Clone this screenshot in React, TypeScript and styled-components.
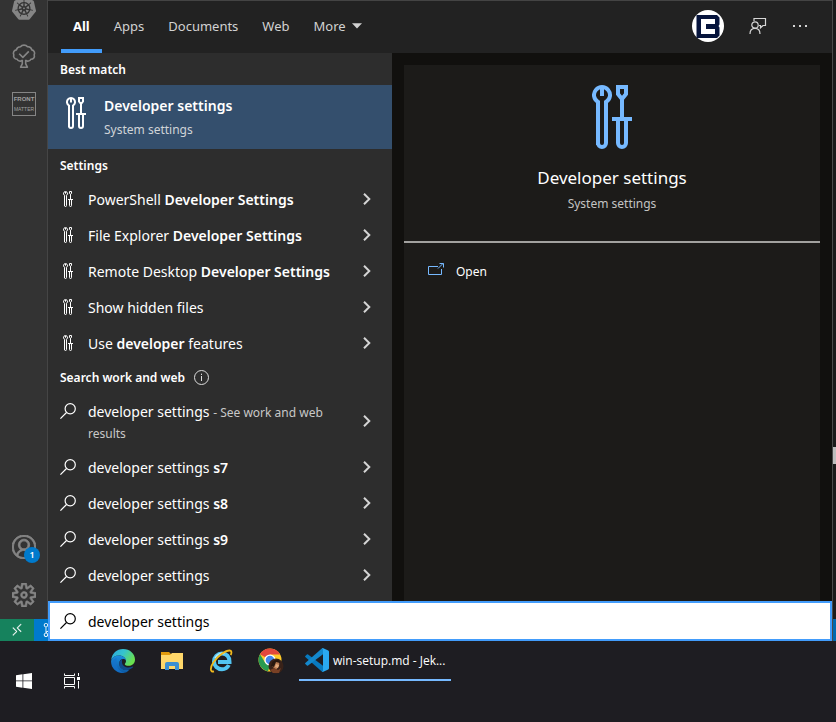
import React, { useState } from "react";
import styled, { createGlobalStyle, css } from "styled-components";
import { VscAccount, VscRemote, VscSettingsGear, VscSourceControl } from "react-icons/vsc";
import { SiKubernetes } from "react-icons/si";

const GlobalStyle = createGlobalStyle`
  * { box-sizing: border-box; }
  body {
    margin: 0;
    background: #1e1e1e;
    color: #fff;
    font-family: "Noto Sans", "Open Sans", sans-serif;
    font-size: 14px;
  }
  button, input { font: inherit; color: inherit; }
  button { margin: 0; padding: 0; border: 0; background: none; text-align: left; cursor: default; }
  svg { display: block; flex: none; }
`;

const Desktop = styled.div`
  display: flex;
  flex-direction: column;
  min-height: 100vh;
`;

const Workspace = styled.div`
  display: flex;
  flex: 1;
`;

/* Editor column */

const EditorSide = styled.aside`
  display: flex;
  flex-direction: column;
  flex: none;
  width: 48px;
`;

const ActivityBar = styled.div`
  display: flex;
  flex-direction: column;
  justify-content: space-between;
  flex: 1;
  padding-left: 1px;
  border-right: 1px solid #454545;
  background: #333;
  color: #858585;
`;

const ActivityGroup = styled.nav`
  display: flex;
  flex-direction: column;
`;

const Activity = styled.button<{ $clipped?: boolean; $heavy?: boolean }>`
  position: relative;
  display: flex;
  align-items: center;
  justify-content: center;
  height: 48px;
  ${(p) => p.$clipped && css`
    height: 32px;
    align-items: flex-end;
    padding-bottom: 12px;
    overflow: hidden;
  `}
  ${(p) => p.$heavy && css`
    svg { stroke: currentColor; stroke-width: 0.6; }
  `}
`;

const Badge = styled.span`
  position: absolute;
  right: 7px;
  bottom: 8px;
  width: 16px;
  height: 16px;
  border-radius: 50%;
  background: #007acc;
  color: #fff;
  font-size: 9px;
  font-weight: 600;
  line-height: 16px;
  text-align: center;
`;

const FrontMatterMark = styled.span`
  display: flex;
  flex-direction: column;
  align-items: center;
  justify-content: center;
  width: 24px;
  height: 24px;
  border: 1px solid #858585;
  color: #a0a0a0;
  font-family: "Liberation Sans", sans-serif;
  font-size: 5px;
  line-height: 10px;
  b { font-size: 6px; }
`;

const Status = styled.div`
  display: flex;
  height: 22px;
  color: #fff;
`;

const RemoteStatus = styled.button`
  display: flex;
  align-items: center;
  justify-content: center;
  width: 34px;
  background: #16825d;
  svg { stroke: currentColor; stroke-width: 0.4; }
`;

const BranchStatus = styled.button`
  display: flex;
  align-items: center;
  flex: 1;
  min-width: 0;
  padding-left: 8px;
  overflow: hidden;
  background: #007acc;
`;

const EditorEdge = styled.div`
  display: flex;
  flex-direction: column;
  justify-content: flex-end;
  flex: none;
  width: 4px;
  border-left: 1px solid #4a4a4a;
  background: #1b1b1b;
`;

const EdgeThumb = styled.div`
  height: 17px;
  margin-bottom: 155px;
  background: #bdbdbd;
`;

const EdgeStatus = styled.div`
  height: 22px;
  background: #0068ae;
`;

/* Search flyout */

const Flyout = styled.main`
  display: flex;
  flex-direction: column;
  flex: 1;
  min-width: 0;
`;

const Header = styled.header`
  display: flex;
  align-items: center;
  justify-content: space-between;
  height: 53px;
  padding: 0 24px 0 13px;
  border-top: 1px solid #444;
  background: #222;
`;

const Tabs = styled.nav`
  display: flex;
  height: 52px;
`;

const Tab = styled.button<{ $active?: boolean }>`
  display: flex;
  align-items: center;
  gap: 6px;
  padding: 2px 12px 0;
  border-bottom: 4px solid ${(p) => (p.$active ? "#429cfb" : "transparent")};
  color: ${(p) => (p.$active ? "#fff" : "#d2d2d2")};
  font-size: 13px;
  font-weight: ${(p) => (p.$active ? 700 : 400)};
`;

const HeaderActions = styled.div`
  display: flex;
  align-items: center;
  gap: 25px;
  padding-bottom: 2px;
  color: #d6d6d6;
`;

const Body = styled.div`
  display: flex;
  flex: 1;
`;

const Results = styled.section`
  flex: none;
  width: 344px;
  padding-bottom: 8px;
  background: #2d2d2d;
`;

const GroupTitle = styled.h2`
  display: flex;
  align-items: center;
  gap: 9px;
  height: 32px;
  margin: 0;
  padding-left: 12px;
  color: #fff;
  font-size: 12px;
  font-weight: 600;
`;

const BestMatch = styled.button`
  display: flex;
  align-items: flex-start;
  gap: 18px;
  width: 100%;
  height: 64px;
  padding: 12px 18px 0;
  background: #344f6d;
`;

const BestText = styled.span`
  display: flex;
  flex-direction: column;
  margin-top: -3px;
`;

const BestName = styled.span`
  font-weight: 600;
  line-height: 24px;
`;

const Caption = styled.span`
  color: #d0d4d8;
  font-size: 12px;
  line-height: 24px;
`;

const Row = styled.button<{ $tall?: boolean }>`
  display: flex;
  align-items: center;
  width: 100%;
  height: ${(p) => (p.$tall ? 56 : 36)}px;
  padding: 0 21px 0 12px;
`;

const RowIcon = styled.span<{ $top?: boolean }>`
  display: flex;
  justify-content: center;
  width: 16px;
  margin-right: 12px;
  ${(p) => p.$top && css`align-self: flex-start; margin-top: 10px;`}
`;

const RowText = styled.span<{ $wrapped?: boolean }>`
  flex: 1;
  min-width: 0;
  padding-right: 20px;
  line-height: 21px;
  ${(p) => p.$wrapped && css`padding-top: 2px;`}
  b { font-weight: 600; }
  small { color: #c8c8c8; font-size: 12px; line-height: 16px; }
`;

const Preview = styled.section`
  display: flex;
  flex: 1;
  min-width: 0;
  padding: 12px 12px 0;
  background: #11100e;
`;

const PreviewCard = styled.div`
  flex: 1;
  background: #1c1b19;
`;

const PreviewHead = styled.div`
  display: flex;
  flex-direction: column;
  align-items: center;
  height: 178px;
  padding-top: 20px;
  border-bottom: 2px solid #a2a19f;
`;

const PreviewTitle = styled.h1`
  margin: 17px 0 0;
  font-size: 17px;
  font-weight: 400;
  line-height: 24px;
`;

const PreviewCaption = styled.p`
  margin: 2px 0 0;
  color: #c4c4c3;
  font-size: 12px;
  line-height: 24px;
`;

const OpenAction = styled.button`
  display: flex;
  align-items: center;
  gap: 12px;
  width: 100%;
  height: 40px;
  margin-top: 8px;
  padding: 0 24px;
  font-size: 12px;
`;

const SearchBox = styled.label`
  display: flex;
  align-items: center;
  gap: 12px;
  height: 40px;
  padding: 0 10px;
  border: 2px solid #429cfb;
  background: #fff;
  color: #000;
`;

const SearchInput = styled.input`
  flex: 1;
  min-width: 0;
  padding: 0;
  border: 0;
  outline: 0;
  background: transparent;
`;

/* Taskbar */

const Taskbar = styled.footer`
  display: flex;
  height: 81px;
  background: #1e1d22;
`;

const SystemButton = styled.button`
  display: flex;
  align-items: center;
  justify-content: center;
  width: 48px;
  height: 80px;
`;

const Pinned = styled.div`
  display: flex;
  height: 40px;
  padding-left: 2px;
`;

const AppButton = styled.button`
  display: flex;
  align-items: center;
  justify-content: center;
  width: 49px;
  height: 40px;
`;

const WindowButton = styled.button`
  display: flex;
  align-items: center;
  gap: 4px;
  width: 152px;
  height: 40px;
  margin-left: 5px;
  padding-left: 6px;
  border-bottom: 2px solid #76b9ff;
  font-family: "Open Sans", "Noto Sans", sans-serif;
  font-size: 12px;
  white-space: nowrap;
`;

/* Icons */

const ToolsIcon = ({ height, color = "#fff" }: { height: number; color?: string }) => (
  <svg width={(height * 40) / 64} height={height} viewBox="0 0 40 64" fill="none" stroke={color} strokeWidth="4">
    <path d="M6 60V17A8 8 0 1 1 14 17V58A4 4 0 0 1 6 58" />
    <path d="M10 3V11" />
    <path d="M26 2H34V9L30 14L26 9Z" />
    <path d="M30 13V33M20 34H40M26 35V58A4 4 0 0 0 34 58V35" />
  </svg>
);

const SearchIcon = () => (
  <svg width="16" height="16" viewBox="0 0 16 16" fill="none" stroke="currentColor" strokeWidth="1.2">
    <circle cx="10.2" cy="5.8" r="5.1" />
    <path d="M6.5 9.5L.4 15.6" />
  </svg>
);

const Chevron = () => (
  <svg width="8" height="12" viewBox="0 0 8 12" fill="none" stroke="#d4d4d4" strokeWidth="2">
    <path d="M1 .8L6.3 6L1 11.2" />
  </svg>
);

const InfoIcon = () => (
  <svg width="15" height="15" viewBox="0 0 15 15" fill="none" stroke="#ddd">
    <circle cx="7.5" cy="7.5" r="7" />
    <path d="M7.5 6V11M7.5 3.7V5" />
  </svg>
);

const TreeIcon = () => (
  <svg width="24" height="24" viewBox="0 0 24 24" fill="none" stroke="currentColor" strokeWidth="1.6" strokeLinejoin="round">
    <path d="M10.3 16.3C8.7 17.7 6 17.2 5.2 15.2C2.6 15.3 1 13 1.8 10.9C.7 8.6 2 6.2 4.3 5.9C5 3.6 6.7 2.7 8.5 2.8C10 .6 14 .6 15.5 2.8C17.7 2.5 19.3 3.8 19.8 5.9C22.2 6.4 23.2 8.7 22.2 10.9C23 13.2 21.4 15.3 18.8 15.2C18 17.2 15.3 17.7 13.7 16.3" />
    <path d="M7.2 9.8L10.9 13.4L16.8 7.4" />
    <path d="M10.3 15.8V19.8L8.6 23.2H15.4L13.7 19.8V15.8" />
  </svg>
);

const AccountLogo = () => (
  <svg width="32" height="32" viewBox="0 0 32 32">
    <circle cx="16" cy="16" r="16" fill="#fff" />
    <path d="M4.5 5H25L27.500 7.500V14.500L26.500 16L27.500 17.500V25.500L25 28H4.500Z" fill="#06143c" />
    <path d="M9 9H23V14H14V19H23V24H9Z" fill="#fff" />
  </svg>
);

const FeedbackIcon = () => (
  <svg width="18" height="18" viewBox="0 0 18 18" fill="none" stroke="currentColor" strokeWidth="1.200">
    <path d="M5 4V1.500H16.500V8.500H14L11.500 10.800V8.500H10" />
    <circle cx="6" cy="8" r="3.200" />
    <path d="M1 17C1 13.500 3 11.300 6 11.300S11 13.500 11 17" />
  </svg>
);

const MoreDots = () => (
  <svg width="16" height="4" viewBox="0 0 16 4" fill="currentColor">
    <path d="M1 1H3V3H1ZM7 1H9V3H7ZM13 1H15V3H13Z" />
  </svg>
);

const Caret = () => (
  <svg width="10" height="6" viewBox="0 0 10 6" fill="currentColor">
    <path d="M0 .3H10L5 5.500Z" />
  </svg>
);

const OpenIcon = () => (
  <svg width="16" height="16" viewBox="0 0 16 16" fill="none" stroke="#76b9ff">
    <path d="M10 3.500H.5V11.500H13.500V6" />
    <path d="M10 5.500L15 .5M11.500 .5H15.500V4.500" />
  </svg>
);

const WindowsIcon = () => (
  <svg width="16" height="16" viewBox="0 0 16 16" fill="#fff">
    <path d="M0 2.200L6.500 1.300V7.500H0ZM7.300 1.200L16 0V7.500H7.300ZM0 8.300H6.500V14.700L0 13.800ZM7.300 8.300H16V16L7.300 14.800Z" />
  </svg>
);

const TaskViewIcon = () => (
  <svg width="16" height="16" viewBox="0 0 16 16" fill="none" stroke="#fff">
    <path d="M.5 .5V2.500H10.500V.5M.5 4.500H10.500V11.500H.5ZM.5 15.500V13.500H10.500V15.500M14.500 0V3M14.500 8V15.500" />
    <path d="M13 4H16V7H13Z" fill="#fff" stroke="none" />
  </svg>
);

const EdgeIcon = () => (
  <svg width="24" height="24" viewBox="0 0 24 24">
    <defs>
      <linearGradient id="edgeTop" x1="0" y1="0" x2="1" y2=".5">
        <stop offset="0" stopColor="#2aa7df" />
        <stop offset=".5" stopColor="#35c3ce" />
        <stop offset="1" stopColor="#6ae04e" />
      </linearGradient>
      <linearGradient id="edgeLow" x1="0" y1="0" x2="0" y2="1">
        <stop offset="0" stopColor="#1b8ede" />
        <stop offset="1" stopColor="#0c59a4" />
      </linearGradient>
    </defs>
    <path d="M.2 11C.8 4.500 5.800 0 12 0C19 0 24 5 24 10.500C24 14.500 21 16.800 17.600 16.800C15 16.800 13.800 16 13.800 15.200C13.800 14.500 15 14 15 12C15 9 12 6.500 8.200 6.500C4.300 6.500 1.400 8.500 .2 11Z" fill="url(#edgeTop)" />
    <path d="M.1 12C.7 8.700 4 6.500 8 6.500C12 6.500 15 9 15 11.500C13 8.800 8.300 9.800 8.300 14.500C8.300 19 13 22 18.500 20.500C16.700 23 14.300 24 12 24C5 24-.3 18.500 .1 12Z" fill="url(#edgeLow)" />
    <path d="M11.300 10C9.200 11 8.200 12.700 8.200 15C8.200 20.500 15 23.500 21.800 18.500C22.500 17.800 22 17.300 21.200 17.700C17 19.600 11.500 18 11 13.500C10.900 12 11 11 11.300 10Z" fill="#114a8b" />
    <path d="M5.500 12C5 18 8.500 22.500 13.500 23.900C6.500 24.500 1.500 20 1 15.500C.8 12.500 2.500 10 5.500 9Z" fill="#1672cc" opacity=".7" />
  </svg>
);

const FolderIcon = () => (
  <svg width="22" height="20" viewBox="0 0 22 20">
    <path d="M0 1H8L10 3H21V8H0Z" fill="#e19a0d" />
    <path d="M0 4H9L11 2H22V18H0Z" fill="#ffd76a" />
    <path d="M4 19V13Q4 11 6 11H16Q18 11 18 13V19H14V15H8V19Z" fill="#3b8fd2" />
  </svg>
);

const ExplorerIcon = () => (
  <svg width="24" height="24" viewBox="0 0 24 24" fill="none">
    <path d="M19.800 16C18.500 18.700 16 20.200 13 20.200C8.500 20.200 5 17 5 12.500S8.500 4.500 13 4.500S20.500 7.500 20.500 13H9" stroke="#52c5f3" strokeWidth="4" />
    <path d="M6 9C8 5 12 3.500 15.500 4.800" stroke="#b4ecff" strokeWidth="1.500" />
    <path d="M5 22.300C.8 23.600 1 18.500 4.300 13.500C9 6.500 17 1.300 20.800 1.500C23 1.700 22.700 4 21.700 6" stroke="#f0b91d" strokeWidth="1.800" />
  </svg>
);

const ChromeIcon = () => (
  <svg width="28" height="26" viewBox="-2 0 28 26">
    <circle cx="12" cy="12" r="11.500" fill="#ffca28" />
    <path d="M12 12L2 6.300A11.500 11.500 0 0 1 22 6.500H12Z" fill="#e2473c" />
    <path d="M2 6.300L7.300 15L12 17L10 23.300A11.500 11.500 0 0 1 2 6.300Z" fill="#299a51" />
    <circle cx="12" cy="12" r="5.600" fill="#fff" />
    <circle cx="12" cy="12" r="4.300" fill="#4285e8" />
    <circle cx="18" cy="18" r="7.500" fill="#392219" />
    <path d="M16 12C20 11 22 14 21 18L18 22L14 18Z" fill="#b87b52" />
    <path d="M14 15C16 10 22 11 22 15L18 14L16 19L13 18Z" fill="#27170f" />
    <path d="M12 22L16 20L20 22L23 20L21 25H15Z" fill="#794025" />
    <path d="M18 16L21 17L20 20L17 19Z" fill="#e2aa7d" />
  </svg>
);

const CodeIcon = () => (
  <svg width="24" height="24" viewBox="0 0 24 24">
    <path d="M.3 7.900L1.900 6.500Q2.500 6 3.100 6.400L18 17.700V24L16.800 23.500L.3 8.900Q-.1 8.400 .3 7.900Z" fill="#0879be" />
    <path d="M.3 16.100L1.900 17.500Q2.500 18 3.100 17.600L18 6.300V0L16.800 .5L.3 15.100Q-.1 15.600 .3 16.100Z" fill="#1488cc" />
    <path d="M16.900 .5Q17.500 -.2 18.300 .2L23.200 2.500Q24 2.900 24 3.800V20.200Q24 21.100 23.200 21.500L18.300 23.800Q17.500 24.200 16.900 23.500Q18 23.700 18 22.500V1.500Q18 .3 16.900 .5Z" fill="#2aa9f1" />
  </svg>
);

const settings = [
  { id: "ps", label: <>PowerShell <b>Developer Settings</b></> },
  { id: "fe", label: <>File Explorer <b>Developer Settings</b></> },
  { id: "rd", label: <>Remote Desktop <b>Developer Settings</b></> },
  { id: "hf", label: <>Show hidden files</> },
  { id: "df", label: <>Use <b>developer</b> features</> },
];

const suggestions = ["s7", "s8", "s9", ""];

export default function App() {
  const [query, setQuery] = useState("developer settings");
  return (
    <>
      <GlobalStyle />
      <Desktop>
        <Workspace>
          <EditorSide>
            <ActivityBar>
              <ActivityGroup>
                <Activity $clipped aria-label="Kubernetes"><SiKubernetes size={24} /></Activity>
                <Activity aria-label="Todo tree"><TreeIcon /></Activity>
                <Activity>
                  <FrontMatterMark><b>FRONT</b><span>MATTER</span></FrontMatterMark>
                </Activity>
              </ActivityGroup>
              <ActivityGroup>
                <Activity $heavy aria-label="Accounts"><VscAccount size={24} /><Badge>1</Badge></Activity>
                <Activity $heavy aria-label="Manage"><VscSettingsGear size={24} /></Activity>
              </ActivityGroup>
            </ActivityBar>
            <Status>
              <RemoteStatus aria-label="Remote"><VscRemote size={14} /></RemoteStatus>
              <BranchStatus aria-label="Branch"><VscSourceControl size={14} /></BranchStatus>
            </Status>
          </EditorSide>

          <Flyout>
            <Header>
              <Tabs>
                <Tab $active>All</Tab>
                <Tab>Apps</Tab>
                <Tab>Documents</Tab>
                <Tab>Web</Tab>
                <Tab>More <Caret /></Tab>
              </Tabs>
              <HeaderActions>
                <button aria-label="Account"><AccountLogo /></button>
                <button aria-label="Feedback"><FeedbackIcon /></button>
                <button aria-label="Options"><MoreDots /></button>
              </HeaderActions>
            </Header>
            <Body>
              <Results>
                <GroupTitle>Best match</GroupTitle>
                <BestMatch>
                  <ToolsIcon height={32} />
                  <BestText>
                    <BestName>Developer settings</BestName>
                    <Caption>System settings</Caption>
                  </BestText>
                </BestMatch>
                <GroupTitle>Settings</GroupTitle>
                {settings.map((item) => (
                  <Row key={item.id}>
                    <RowIcon><ToolsIcon height={16} /></RowIcon>
                    <RowText>{item.label}</RowText>
                    <Chevron />
                  </Row>
                ))}
                <GroupTitle>Search work and web <InfoIcon /></GroupTitle>
                <Row $tall>
                  <RowIcon $top><SearchIcon /></RowIcon>
                  <RowText $wrapped>developer settings <small>- See work and web results</small></RowText>
                  <Chevron />
                </Row>
                {suggestions.map((suffix) => (
                  <Row key={suffix}>
                    <RowIcon><SearchIcon /></RowIcon>
                    <RowText>developer settings {suffix && <b>{suffix}</b>}</RowText>
                    <Chevron />
                  </Row>
                ))}
              </Results>
              <Preview>
                <PreviewCard>
                  <PreviewHead>
                    <ToolsIcon height={64} color="#76b9ff" />
                    <PreviewTitle>Developer settings</PreviewTitle>
                    <PreviewCaption>System settings</PreviewCaption>
                  </PreviewHead>
                  <OpenAction><OpenIcon />Open</OpenAction>
                </PreviewCard>
              </Preview>
            </Body>
            <SearchBox>
              <SearchIcon />
              <SearchInput aria-label="Search" value={query} onChange={(e) => setQuery(e.target.value)} />
            </SearchBox>
          </Flyout>

          <EditorEdge>
            <EdgeThumb />
            <EdgeStatus />
          </EditorEdge>
        </Workspace>

        <Taskbar>
          <SystemButton aria-label="Start"><WindowsIcon /></SystemButton>
          <SystemButton aria-label="Task view"><TaskViewIcon /></SystemButton>
          <Pinned>
            <AppButton aria-label="Edge"><EdgeIcon /></AppButton>
            <AppButton aria-label="File Explorer"><FolderIcon /></AppButton>
            <AppButton aria-label="Internet Explorer"><ExplorerIcon /></AppButton>
            <AppButton aria-label="Chrome"><ChromeIcon /></AppButton>
            <WindowButton><CodeIcon />win-setup.md - Jek...</WindowButton>
          </Pinned>
        </Taskbar>
      </Desktop>
    </>
  );
}
